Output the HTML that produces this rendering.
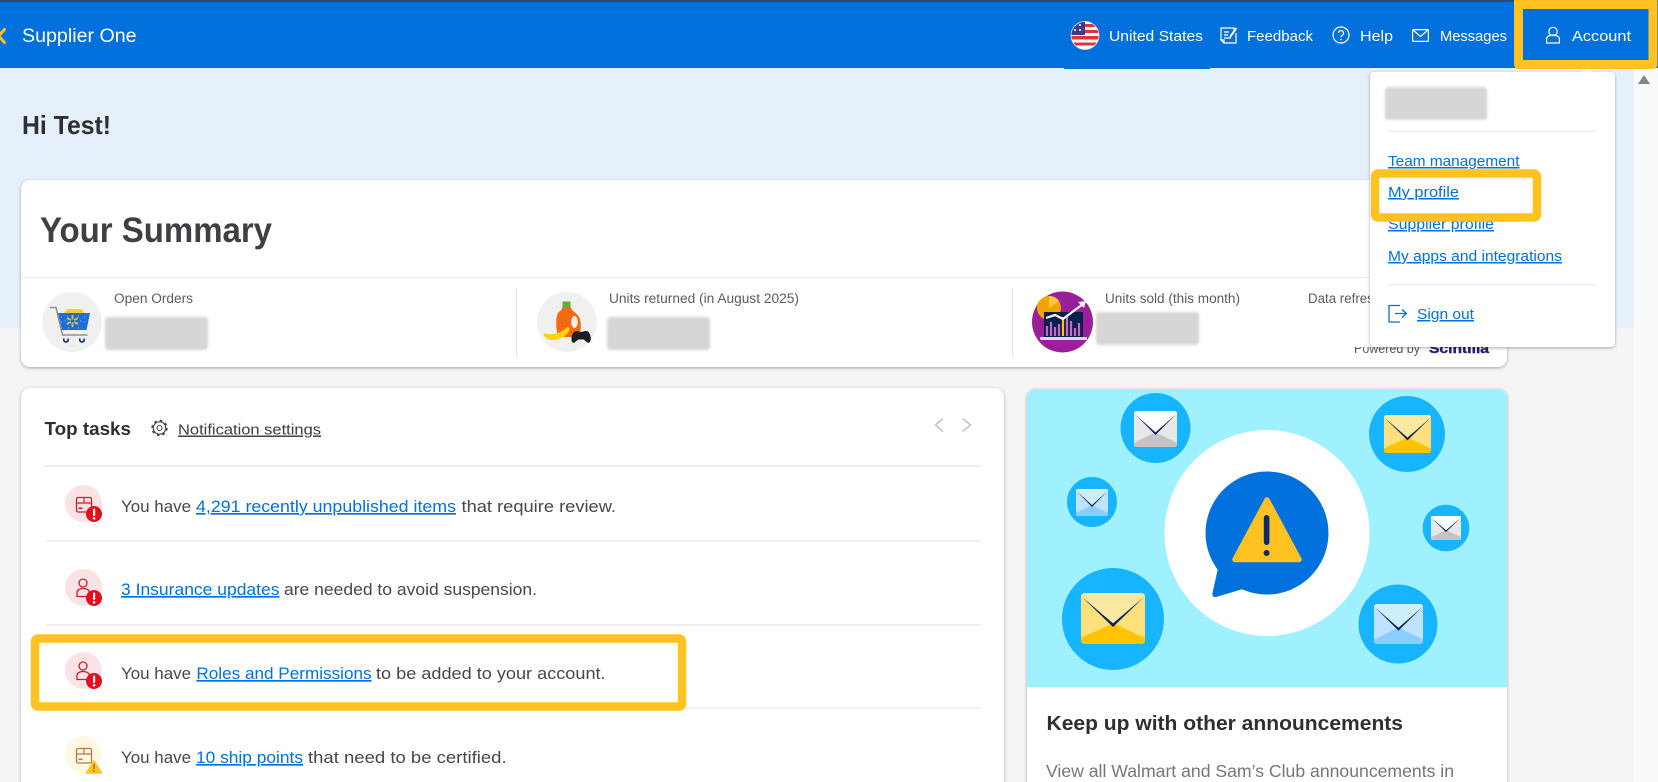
<!DOCTYPE html>
<html lang="en">
<head>
<meta charset="utf-8">
<title>Supplier One</title>
<style>
html,body{margin:0;padding:0;width:1658px;height:782px;overflow:hidden;background:#f5f5f5}
svg{display:block}
text{font-family:"Liberation Sans",sans-serif;white-space:pre}
.n{fill:#fff;font-size:15px}
.b{font-weight:700}
.t{fill:#46474a;font-size:16.5px}
.l{fill:#0071dc;font-size:16.5px;text-decoration:underline}
.d{fill:#0071dc;font-size:15px;text-decoration:underline}
.s{fill:#5a5c60;font-size:13.5px}
.card{filter:drop-shadow(0 1px 1.5px rgba(0,0,0,.32))}
.blur{filter:blur(1.2px)}
</style>
</head>
<body>
<svg width="1658" height="782" viewBox="0 0 1658 782" xmlns="http://www.w3.org/2000/svg">
<defs>
<clipPath id="flagc"><circle cx="1085" cy="35.5" r="14"/></clipPath>
<clipPath id="annc"><path d="M1027 687V397a8 8 0 0 1 8-8h464a8 8 0 0 1 8 8v290z"/></clipPath>
<clipPath id="botc"><rect x="1300" y="347" width="220" height="20"/></clipPath>
<symbol id="ey" viewBox="0 0 100 84" preserveAspectRatio="none">
<rect width="100" height="84" rx="6" fill="#ffe07a"/>
<path d="M0 6a6 6 0 0 1 6-6h88a6 6 0 0 1 6 6v1L50 53 0 7z" fill="#fae7a0"/>
<path d="M50 50 100 74v4a6 6 0 0 1-6 6H6a6 6 0 0 1-6-6v-4z" fill="#ffc300"/>
<path d="M1 6 50 50 99 6 50 56z" fill="#0b2050"/>
</symbol>
<symbol id="ew" viewBox="0 0 100 84" preserveAspectRatio="none">
<rect width="100" height="84" rx="6" fill="#e8e8e8"/>
<path d="M0 6a6 6 0 0 1 6-6h88a6 6 0 0 1 6 6v1L50 53 0 7z" fill="#fff"/>
<path d="M50 50 100 74v4a6 6 0 0 1-6 6H6a6 6 0 0 1-6-6v-4z" fill="#c4c4c4"/>
<path d="M1 6 50 50 99 6 50 56z" fill="#0b2050"/>
</symbol>
<symbol id="eb" viewBox="0 0 100 84" preserveAspectRatio="none">
<rect width="100" height="84" rx="6" fill="#bfe3ff"/>
<path d="M0 6a6 6 0 0 1 6-6h88a6 6 0 0 1 6 6v1L50 53 0 7z" fill="#cfeefc"/>
<path d="M50 50 100 74v4a6 6 0 0 1-6 6H6a6 6 0 0 1-6-6v-4z" fill="#8ccdff"/>
<path d="M1 6 50 50 99 6 50 56z" fill="#0b2050"/>
</symbol>
<g id="box"><rect x="11.500" y="12.500" width="15" height="14.500" rx="1.500" fill="none" stroke-width="1.300"/><path d="M11.500 18h15M19 12.500V18" fill="none" stroke-width="1.200"/><rect x="13.500" y="22.500" width="4" height="1.600" stroke="none"/></g>
<g id="person"><circle cx="18" cy="14" r="4" fill="none" stroke-width="1.300"/><path d="M12 27.500v-4c0-2.500 2.500-4 6-4s6.500 1.500 6.500 4v4z" fill="none" stroke-width="1.300"/></g>
<g id="bad"><circle cx="29" cy="29" r="8" fill="#e2101d"/><rect x="28" y="23.500" width="2.200" height="7.500" rx="1" fill="#fff"/><circle cx="29.100" cy="33.300" r="1.300" fill="#fff"/></g>
</defs>

<!-- page background -->
<rect width="1658" height="782" fill="#f5f5f5"/>
<rect y="68" width="1634" height="260" fill="#e6f0fa"/>
<rect x="1634" y="68" width="24" height="714" fill="#fafafa"/>
<path d="M1644 75l6 9h-12z" fill="#858585"/>

<!-- header -->
<rect width="1658" height="68" fill="#0071dc"/>
<rect width="1658" height="2" fill="#37475c"/>
<rect x="1064" y="68" width="146" height="1" fill="#0071dc"/>
<path d="M0 34.500 4.500 29.500M0 37.500 4.500 42.500" stroke="#ffc220" stroke-width="3" stroke-linecap="round"/>
<text class="n" x="22" y="42" style="font-size:19px" textLength="114.600" lengthAdjust="spacingAndGlyphs">Supplier One</text>

<g clip-path="url(#flagc)">
<rect x="1071" y="21" width="28" height="29" fill="#fff"/>
<path d="M1071 24h28v3h-28zM1071 30h28v3h-28zM1071 36h28v3.500h-28zM1071 42.500h28v3h-28z" fill="#e3303f"/>
<rect x="1071" y="21" width="14" height="14" fill="#3c3f86"/>
<path d="M1074 25h2M1079 25h2M1074 30h2M1079 30h2" stroke="#fff" stroke-width="1.600"/>
</g>
<circle cx="1085" cy="35.500" r="14" fill="none" stroke="#dfe6f0" stroke-width=".8"/>
<text class="n" x="1109" y="41" textLength="94" lengthAdjust="spacingAndGlyphs">United States</text>

<path d="M1221 40V28h13v2M1236 33v10h-12l-3-3h3v3" fill="none" stroke="#fff" stroke-width="1.200"/>
<path d="M1224 32h5M1224 35h4M1224 38h7" fill="none" stroke="#fff" stroke-width="1.200"/>
<path d="M1230 37l6.500-9" fill="none" stroke="#fff" stroke-width="2"/>
<text class="n" x="1247" y="41" textLength="66" lengthAdjust="spacingAndGlyphs">Feedback</text>

<circle cx="1341" cy="35" r="8" fill="none" stroke="#fff" stroke-width="1.200"/>
<path d="M1338.500 33a2.500 2.500 0 1 1 3.800 2.200c-.9.600-1.300 1-1.300 2" fill="none" stroke="#fff" stroke-width="1.200"/>
<circle cx="1341" cy="39.500" r=".8" fill="#fff"/>
<text class="n" x="1360" y="41" textLength="33" lengthAdjust="spacingAndGlyphs">Help</text>

<rect x="1412.600" y="29.600" width="15.800" height="11.800" rx="1" fill="none" stroke="#fff" stroke-width="1.200"/>
<path d="M1413 30l7.500 6.500L1428 30" fill="none" stroke="#fff" stroke-width="1.200"/>
<text class="n" x="1440" y="41" textLength="67" lengthAdjust="spacingAndGlyphs">Messages</text>

<circle cx="1553" cy="31.500" r="4.200" fill="none" stroke="#fff" stroke-width="1.200"/>
<path d="M1546.600 43v-4c0-2.500 3-4 6.400-4s6.400 1.500 6.400 4v4z" fill="none" stroke="#fff" stroke-width="1.200"/>
<text class="n" x="1572" y="41" textLength="59" lengthAdjust="spacingAndGlyphs">Account</text>

<text class="b" x="22" y="134" fill="#2e2f32" style="font-size:26px" textLength="89" lengthAdjust="spacingAndGlyphs">Hi Test!</text>

<!-- summary card -->
<rect class="card" x="21" y="180" width="1486" height="187" rx="9" fill="#fff"/>
<text class="b" x="40" y="242" fill="#3f4043" style="font-size:35px" textLength="232" lengthAdjust="spacingAndGlyphs">Your Summary</text>
<rect x="21" y="277" width="1486" height="1" fill="#eeeeee"/>
<rect x="516" y="288" width="1" height="69" fill="#e4e4e4"/>
<rect x="1012" y="288" width="1" height="69" fill="#e4e4e4"/>

<!-- cart -->
<circle cx="72" cy="322" r="30" fill="#f0f0f0"/>
<path d="M64 313l3-4h15l2 4z" fill="#ffc83d"/>
<path d="M58 313h32l-3.500 17H62z" fill="#1c6fd8"/>
<path d="M61 317h1M65 321h1M61 322h1M84 317h1M80 321h1M84 322h1M68 328h1M78 328h1M67 316h1M78 316h1" stroke="#6ea8ee" stroke-width="1.300"/>
<path d="M50 307.500h6l6.500 27.500h25" fill="none" stroke="#8f8f8f" stroke-width="1.500"/>
<path d="M72.500 315v4.500M72.500 322.500v4.500M67 318l3.800 2M78 318l-3.800 2M67 324l3.800-2M78 324l-3.800-2" stroke="#ffc220" stroke-width="1.700"/>
<path d="M64 338.500a2.300 2.300 0 1 0 4 0M80 338.500a2.300 2.300 0 1 0 4 0" fill="none" stroke="#103a78" stroke-width="1.700"/>
<text class="s" x="114" y="303" textLength="79" lengthAdjust="spacingAndGlyphs">Open Orders</text>
<rect class="blur" x="105" y="317" width="103" height="33" rx="3" fill="#d6d6d6"/>

<!-- bottle -->
<circle cx="567" cy="322" r="30" fill="#f0f0f0"/>
<rect x="562.500" y="301.500" width="8" height="7" fill="#6aa92d"/>
<path d="M562 308h9c1 3 6 5 8 9 2 3 2 10 1.500 14l-1 6H558c-2-8-2.500-18-.5-23 1-3 4.500-3 4.500-6z" fill="#f26a12"/>
<ellipse cx="574.500" cy="322" rx="3.300" ry="6" fill="#f7efe6"/>
<path d="M543.500 333c5 2 16 2 24-6 1 0 2 1 2 2-1 6-10 12-18 11-4-.500-8-3-8-7z" fill="#fbd20f"/>
<path d="M574 332c3-2 5 0 7 0s4-2 7-.500c2.500 1.500 4 9 1.500 11-2.500 1-4-2-6-3h-5c-2 1-3.500 4-6 3-2-2-1-8 1.500-10.500z" fill="#1d1e22"/>
<text class="s" x="609" y="303" textLength="190" lengthAdjust="spacingAndGlyphs">Units returned (in August 2025)</text>
<rect class="blur" x="607" y="317" width="103" height="33" rx="3" fill="#d6d6d6"/>

<!-- chart -->
<circle cx="1062.500" cy="322" r="30.500" fill="#9c1f9a"/>
<circle cx="1049" cy="308" r="12" fill="#f0a500"/>
<path d="M1049 296a12 12 0 0 1 10 5l-10 7z" fill="#ffc83d"/>
<rect x="1044" y="312" width="39" height="25" fill="#0b1f4b"/>
<path d="M1047 336v-10M1051 336v-14M1055 336v-9M1059 336v-12M1067 336v-21M1071 336v-15M1075 336v-8M1079 336v-13" stroke="#c968c8" stroke-width="2.200"/>
<path d="M1063 336v-19" stroke="#ffc220" stroke-width="2.200"/>
<rect x="1040" y="337" width="47" height="3" rx="1" fill="#d8dbe2"/>
<path d="M1046 318l9-3 8 4 20-15" fill="none" stroke="#fff" stroke-width="2.200"/>
<path d="M1078 302l8-1-2 7z" fill="#fff"/>
<text class="s" x="1105" y="303" textLength="135" lengthAdjust="spacingAndGlyphs">Units sold (this month)</text>
<rect class="blur" x="1096" y="312" width="103" height="33" rx="3" fill="#d6d6d6"/>
<text class="s" x="1308" y="303" textLength="88" lengthAdjust="spacingAndGlyphs">Data refreshed</text>
<g clip-path="url(#botc)">
<text class="s" x="1354" y="353" textLength="66" lengthAdjust="spacingAndGlyphs">Powered by</text>
<text class="b" x="1429" y="353" fill="#2a1a78" stroke="#2a1a78" stroke-width=".4" style="font-size:14px" textLength="60" lengthAdjust="spacingAndGlyphs">Scintilla</text>
</g>

<!-- top tasks card -->
<rect class="card" x="21" y="388" width="983" height="420" rx="9" fill="#fff"/>
<text class="b" x="44.500" y="435" fill="#2e2f32" style="font-size:18.500px" textLength="86.500" lengthAdjust="spacingAndGlyphs">Top tasks</text>
<circle cx="159.500" cy="428" r="6.200" fill="none" stroke="#46474a" stroke-width="1.200"/>
<circle cx="159.500" cy="428" r="7.300" fill="none" stroke="#46474a" stroke-width="1.800" stroke-dasharray="2.600 3.130"/>
<circle cx="159.500" cy="428" r="2.500" fill="none" stroke="#46474a" stroke-width="1.100"/>
<text x="178" y="434.500" fill="#3c3d40" style="font-size:14.500px;text-decoration:underline" textLength="143" lengthAdjust="spacingAndGlyphs">Notification settings</text>
<path d="M943 418.500l-7.500 6.500 7.500 6.500M962.500 418.500l8 6.500-8 6.500" fill="none" stroke="#c4c4c4" stroke-width="1.600"/>
<rect x="44" y="465" width="937" height="2" fill="#f0f0f0"/>
<rect x="46" y="540.500" width="935" height="1.200" fill="#e8e8e8"/>
<rect x="46" y="624" width="935" height="2" fill="#eeeeee"/>
<rect x="46" y="707.500" width="935" height="1.200" fill="#e8e8e8"/>

<g transform="translate(65,485)" fill="#c4202c" stroke="#c4202c"><circle cx="18.500" cy="18.500" r="18.500" fill="#fbe3e5" stroke="none"/><use href="#box"/><use href="#bad" stroke="none"/></g>
<text class="t" x="121" y="512" textLength="70" lengthAdjust="spacingAndGlyphs">You have</text>
<text class="l" x="196" y="512" textLength="260" lengthAdjust="spacingAndGlyphs">4,291 recently unpublished items</text>
<text class="t" x="461.500" y="512" textLength="154.500" lengthAdjust="spacingAndGlyphs">that require review.</text>

<g transform="translate(65,569)" fill="#c4202c" stroke="#c4202c"><circle cx="18.500" cy="18.500" r="18.500" fill="#fbe3e5" stroke="none"/><use href="#person"/><use href="#bad" stroke="none"/></g>
<text class="l" x="121" y="595" textLength="158.500" lengthAdjust="spacingAndGlyphs">3 Insurance updates</text>
<text class="t" x="284" y="595" textLength="253" lengthAdjust="spacingAndGlyphs">are needed to avoid suspension.</text>

<g transform="translate(65,652)" fill="#c4202c" stroke="#c4202c"><circle cx="18.500" cy="18.500" r="18.500" fill="#fbe3e5" stroke="none"/><use href="#person"/><use href="#bad" stroke="none"/></g>
<text class="t" x="121" y="679" textLength="70" lengthAdjust="spacingAndGlyphs">You have</text>
<text class="l" x="196.400" y="679" textLength="175.200" lengthAdjust="spacingAndGlyphs">Roles and Permissions</text>
<text class="t" x="376" y="679" textLength="229.600" lengthAdjust="spacingAndGlyphs">to be added to your account.</text>

<g transform="translate(65,736)" fill="#b9773a" stroke="#b9773a"><circle cx="18.500" cy="18.500" r="18.500" fill="#fff8e3" stroke="none"/><use href="#box"/>
<path d="M29 25l7.500 12h-15z" fill="#ffc220" stroke="#ffc220" stroke-width="1.500" stroke-linejoin="round"/><rect x="28.200" y="28" width="1.700" height="5" fill="#b97a00" stroke="none"/><circle cx="29" cy="35" r="1" fill="#b97a00" stroke="none"/></g>
<text class="t" x="121" y="763" textLength="70" lengthAdjust="spacingAndGlyphs">You have</text>
<text class="l" x="196" y="763" textLength="107" lengthAdjust="spacingAndGlyphs">10 ship points</text>
<text class="t" x="308" y="763" textLength="198.600" lengthAdjust="spacingAndGlyphs">that need to be certified.</text>

<!-- highlight on task -->
<rect x="35" y="638.500" width="647" height="68" rx="3" fill="none" stroke="#ffc220" stroke-width="8.500"/>

<!-- announcements card -->
<rect class="card" x="1027" y="389" width="480" height="420" rx="8" fill="#fff"/>
<g clip-path="url(#annc)">
<rect x="1027" y="389" width="480" height="298" fill="#a0f1ff"/>
<circle cx="1155.500" cy="428" r="35" fill="#17b5ff"/>
<circle cx="1407" cy="434" r="38" fill="#17b5ff"/>
<circle cx="1092" cy="502" r="25" fill="#17b5ff"/>
<circle cx="1446" cy="528" r="23.300" fill="#17b5ff"/>
<circle cx="1113" cy="619" r="51" fill="#17b5ff"/>
<circle cx="1398" cy="624" r="39.500" fill="#17b5ff"/>
<use href="#ew" x="1134" y="411" width="43" height="36"/>
<use href="#ey" x="1384" y="415" width="47" height="38"/>
<use href="#eb" x="1076" y="489" width="32" height="27"/>
<use href="#ew" x="1431" y="516" width="30" height="24"/>
<use href="#ey" x="1081" y="593" width="64" height="51"/>
<use href="#eb" x="1374" y="604" width="49" height="40"/>
<ellipse cx="1267" cy="533" rx="102.500" ry="103" fill="#fff"/>
<circle cx="1267" cy="533" r="61.500" fill="#0071dc"/>
<path d="M1218 568l-5.500 25c-.500 3 1 4.500 3.500 4l27-8z" fill="#0071dc"/>
<path d="M1267 500l32 59.500h-64z" fill="#ffc220" stroke="#ffc220" stroke-width="5.500" stroke-linejoin="round"/>
<rect x="1263.800" y="515" width="5.600" height="30" rx="2.800" fill="#0b2a66"/>
<circle cx="1266.600" cy="553" r="3" fill="#0b2a66"/>
</g>
<text class="b" x="1046.500" y="730" fill="#2e2f32" style="font-size:20.500px" textLength="356.500" lengthAdjust="spacingAndGlyphs">Keep up with other announcements</text>
<text x="1046" y="777" fill="#74767c" style="font-size:17.500px" textLength="408" lengthAdjust="spacingAndGlyphs">View all Walmart and Sam’s Club announcements in</text>

<!-- account dropdown -->
<path d="M1580 73l7-5 8 5z" fill="#fff"/>
<rect class="card" x="1370" y="72" width="245" height="275" rx="4" fill="#fff"/>
<rect class="blur" x="1385" y="87" width="102" height="33" rx="3" fill="#d6d6d6"/>
<rect x="1388" y="131" width="208" height="1" fill="#e8e8e8"/>
<text class="d" x="1388" y="166" textLength="131.500" lengthAdjust="spacingAndGlyphs">Team management</text>
<text class="d" x="1388" y="197" textLength="71" lengthAdjust="spacingAndGlyphs">My profile</text>
<text class="d" x="1388" y="229" textLength="106" lengthAdjust="spacingAndGlyphs">Supplier profile</text>
<text class="d" x="1388" y="261" textLength="174" lengthAdjust="spacingAndGlyphs">My apps and integrations</text>
<rect x="1388" y="284" width="208" height="1" fill="#e8e8e8"/>
<path d="M1400 305.500h-11v16.500h11M1395 313.500h11M1402 309.500l4.500 4-4.500 4" fill="none" stroke="#0071dc" stroke-width="1.300"/>
<text class="d" x="1417" y="319" textLength="57" lengthAdjust="spacingAndGlyphs">Sign out</text>

<!-- highlights -->
<rect x="1375" y="173.500" width="162" height="44" rx="3" fill="none" stroke="#ffc220" stroke-width="8.500"/>
<path d="M1518.500 0v64.500a0 0 0 0 0 0 0h134.500V0" fill="none" stroke="#ffc220" stroke-width="9" stroke-linejoin="round"/>
<rect x="1514" y="0" width="143" height="9" fill="#ffc220"/>
</svg>
</body>
</html>
